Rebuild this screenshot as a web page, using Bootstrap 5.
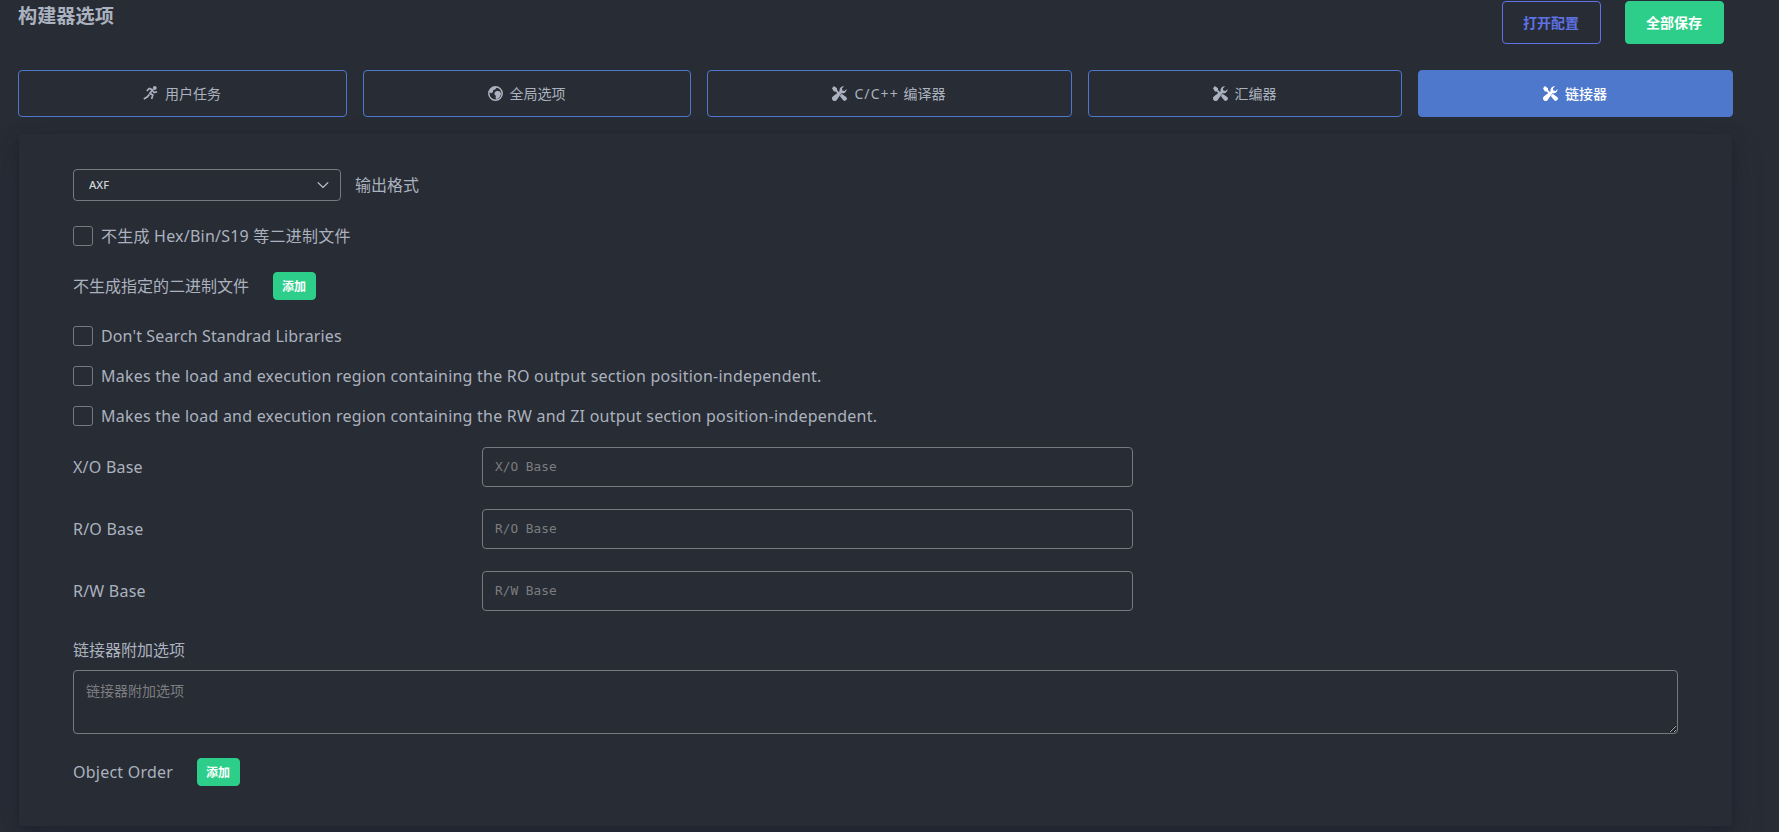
<!DOCTYPE html>
<html lang="zh-CN">
<head>
<meta charset="utf-8">
<title>构建器选项</title>
<link rel="stylesheet" href="https://cdn.jsdelivr.net/npm/bootstrap@5.3.0/dist/css/bootstrap.min.css">
<style>
html, body { height: 100%; overflow: hidden; }
body { background: #282c34; color: #abb2bf; font-family: "Noto Sans", "Noto Sans CJK SC", sans-serif; font-size: 16px; line-height: 24px; }
.page-wrap { width: 1715px; margin-left: 18px; }
.page-head { height: 70px; padding: 1px 9px 0 0; }
.page-title { font-size: 19.2px; line-height: 28px; margin: 1px 0 0; }
.btn { --bs-btn-border-radius: 4px; }
.head-btn { width: 99px; height: 43px; font-size: 14px; padding: 0 1px 0 0; }
.btn-config { color: #5e72e4; border-color: #5e72e4; font-weight: 600; }
.btn-go { background: #2dce89; border-color: #2dce89; color: #fff; font-weight: 700; }
.tabs-row { gap: 16px; }
.tab-btn { height: 47px; padding: 0 1px 0 0; font-size: 14px; color: #abb2bf; border-color: #4d78cc; display: flex; align-items: center; justify-content: center; gap: 7px; }
.tab-btn.active { background: #4d78cc; border-color: #4d78cc; color: #fff; font-weight: 500; }
.tab-btn svg { width: 15px; height: 15px; fill: currentColor; }
.wide-latin { letter-spacing: 1.1px; }
.w-a { width: 329px; } .w-b { width: 316px; flex: 1; } .w-c { width: 365px; } .w-d { width: 314px; } .w-e { width: 315px; }
.panel { margin: 17px 1px 0; height: 692px; border-radius: 4px; background: #282c34; padding: 35px 54px 0; box-shadow: 0 15px 35px rgba(50,50,93,.2), 0 5px 15px rgba(0,0,0,.28); }
.format-row { gap: 14px; margin-bottom: 25px; }
.form-select { width: 268px; height: 32px; background-color: transparent; border-color: #77797e; border-radius: 4px; color: #d0d3d8; font-size: 11.2px; font-weight: 500; line-height: 16px; padding: 0 36px 0 15px;
 background-position: right 11px center; background-size: 12px;
 background-image: url("data:image/svg+xml,%3csvg xmlns='http://www.w3.org/2000/svg' viewBox='0 0 12 12'%3e%3cpath fill='none' stroke='%23c5c8ce' stroke-width='1.2' d='M.8 3.3L6 8.5l5.2-5.2'/%3e%3c/svg%3e"); }
.opt-row { height: 20px; gap: 8px; margin-bottom: 20px; }
.opt-row.loose, .add-row { margin-bottom: 26px; }
.opt-row .form-check-input { width: 20px; height: 20px; margin: 0; background-color: transparent; border-color: #77797e; border-radius: 3px; flex: none; }
.en { white-space: nowrap; letter-spacing: .225px; }
.en-tight { letter-spacing: .12px; }
.add-btn { width: 43px; height: 28px; padding: 1px 1px 0 0; font-size: 12px; line-height: 26px; }
.bases { padding-top: 1px; }
.base-row { height: 40px; margin-bottom: 22px; }
.base-row label { width: 409px; }
.form-control, .form-control:focus { background: transparent; border-color: #77797e; border-radius: 4px; color: #abb2bf; padding: 8px 12px; }
.base-row .form-control { width: 651px; height: 40px; font: 12.8px "DejaVu Sans Mono", monospace; padding-bottom: 10px; }
.form-control::placeholder { color: #7b7d80; }
.extra-label { margin: 27px 0 8px; }
textarea.form-control { width: 1605px; height: 64px; min-height: 64px; font-size: 14px; line-height: 24px; }
</style>
</head>
<body>
<svg class="d-none">
  <symbol id="i-run" viewBox="0 0 15 15"><circle cx="11.8" cy="2" r="1.9"/><path d="M3.8 4.8L6.3 2.4 9.4 3.6 7 7.2l2.8 2-1.2 3.8M9.3 4.3l1.8 2.2 3-.8M6.4 8.4L4.4 10.8 .8 13" fill="none" stroke="currentColor" stroke-width="1.7"/></symbol>
  <symbol id="i-world" viewBox="0 0 15 15"><circle cx="7.5" cy="7.5" r="6.7" fill="none" stroke="currentColor" stroke-width="1.5"/><path d="M2 3.5L5 1h4L7.2 3.4 5.2 4 5 6 3.5 7.2 1 6z"/><path d="M7 6l2-1.2 3 .6 1.2 2.4-1.6 3.4-2.6 2-1.5-1 .4-2.3L6.3 8z"/></symbol>
  <symbol id="i-tools" viewBox="0 0 15 15"><path d="M1.9 0L5 2.2v1.9l2.6 2.6-1.4 1.4-2.5-2.6H1.9L0 2.2z"/><path d="M14.6 3a4.2 4.2 0 01-5.2 4.2L4.5 14.2A2.3 2.3 0 01.8 10.6L7.6 5.3A4.2 4.2 0 0112.1.2L9.9 2.4l.4 2.2 2.2.4z"/><path d="M9.6 7.7l4.6 3.3a2.1 2.1 0 01-3 3.2L7.8 9.9z"/></symbol>
</svg>
<div class="page-wrap">
  <header class="page-head d-flex justify-content-between align-items-start">
    <h1 class="page-title fw-bold">构建器选项</h1>
    <div class="d-flex gap-4">
      <button class="btn head-btn btn-config">打开配置</button>
      <button class="btn head-btn btn-go">全部保存</button>
    </div>
  </header>
  <nav class="tabs-row d-flex">
    <button class="btn tab-btn w-a"><svg><use href="#i-run"/></svg>用户任务</button>
    <button class="btn tab-btn w-b"><svg><use href="#i-world"/></svg>全局选项</button>
    <button class="btn tab-btn w-c"><svg><use href="#i-tools"/></svg><span><span class="wide-latin">C/C++ </span>编译器</span></button>
    <button class="btn tab-btn w-d"><svg><use href="#i-tools"/></svg>汇编器</button>
    <button class="btn tab-btn w-e active"><svg><use href="#i-tools"/></svg>链接器</button>
  </nav>
  <main class="panel">
    <div class="format-row d-flex align-items-center">
      <select class="form-select" id="fmt"><option>AXF</option></select>
      <label for="fmt">输出格式</label>
    </div>
    <div class="opt-row loose d-flex align-items-center"><input id="c1" type="checkbox" class="form-check-input"><label for="c1" class="en">不生成 Hex/Bin/S19 等二进制文件</label></div>
    <div class="add-row d-flex align-items-center gap-4"><span>不生成指定的二进制文件</span><button class="btn add-btn btn-go">添加</button></div>
    <div class="opt-row d-flex align-items-center"><input id="c2" type="checkbox" class="form-check-input"><label for="c2" class="en en-tight">Don't Search Standrad Libraries</label></div>
    <div class="opt-row d-flex align-items-center"><input id="c3" type="checkbox" class="form-check-input"><label for="c3" class="en">Makes the load and execution region containing the RO output section position-independent.</label></div>
    <div class="opt-row d-flex align-items-center"><input id="c4" type="checkbox" class="form-check-input"><label for="c4" class="en">Makes the load and execution region containing the RW and ZI output section position-independent.</label></div>
    <div class="bases">
      <div class="base-row d-flex align-items-center"><label class="en">X/O Base</label><input class="form-control" placeholder="X/O Base"></div>
      <div class="base-row d-flex align-items-center"><label class="en">R/O Base</label><input class="form-control" placeholder="R/O Base"></div>
      <div class="base-row d-flex align-items-center"><label class="en">R/W Base</label><input class="form-control" placeholder="R/W Base"></div>
    </div>
    <label class="extra-label d-block">链接器附加选项</label>
    <textarea class="form-control" placeholder="链接器附加选项"></textarea>
    <div class="d-flex align-items-center gap-4 mt-4"><span class="en">Object Order</span><button class="btn add-btn btn-go">添加</button></div>
  </main>
</div>
<script src="https://cdn.jsdelivr.net/npm/bootstrap@5.3.0/dist/js/bootstrap.bundle.min.js"></script>
</body>
</html>
